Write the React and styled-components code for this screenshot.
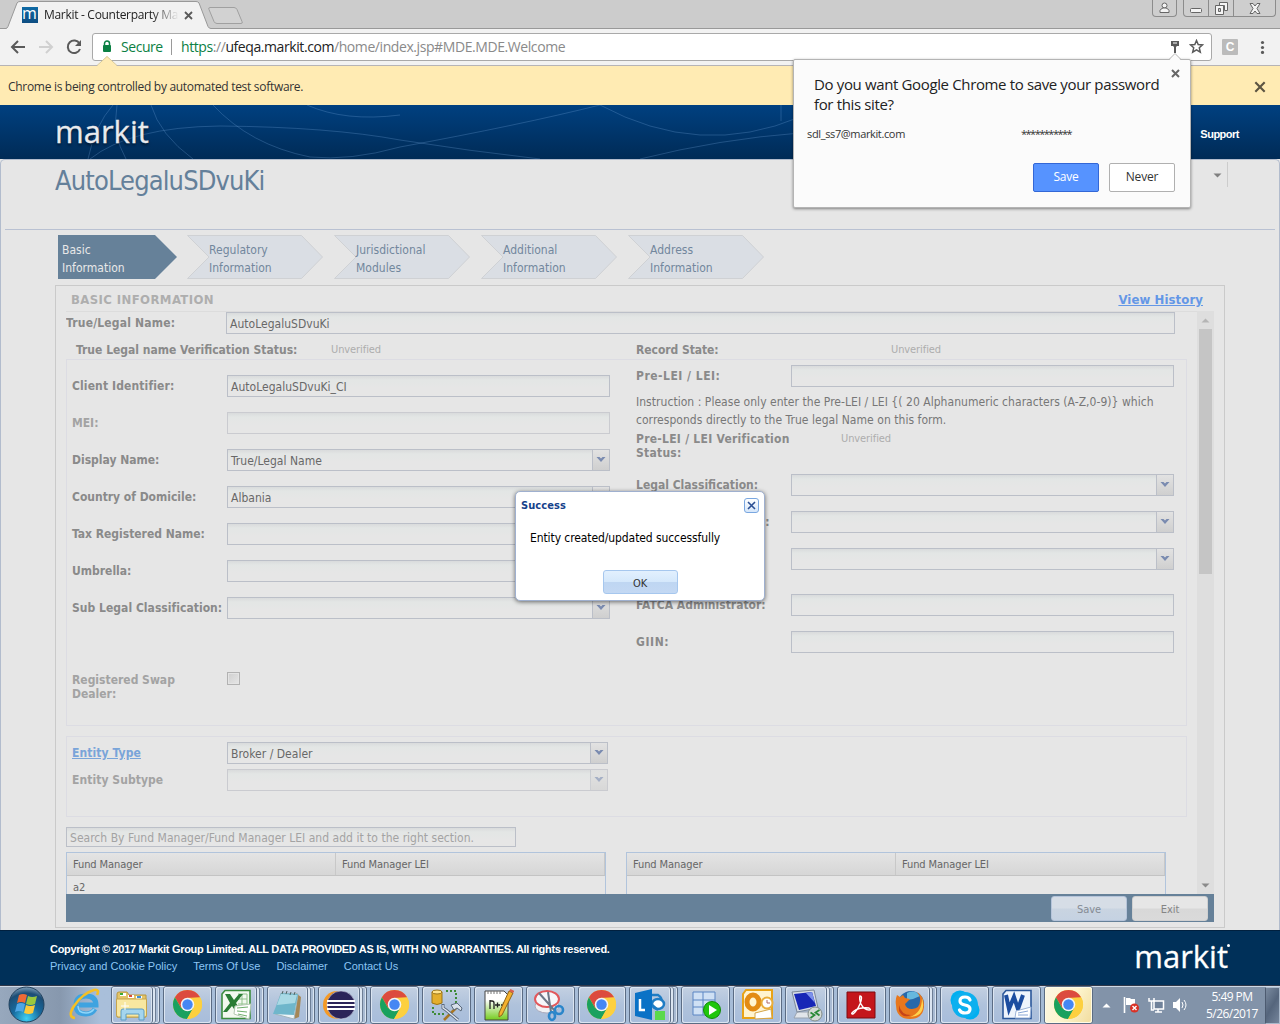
import React from "react";
import styled, { createGlobalStyle, css } from "styled-components";

const tahoma = `"DejaVu Sans Condensed", "DejaVu Sans", sans-serif`;
const segoe = `"Open Sans", "Noto Sans", sans-serif`;
const arial = `"Liberation Sans", sans-serif`;

const Global = createGlobalStyle`
  * { box-sizing: border-box; }
  body { margin: 0; }
  svg { display: block; flex: none; }
`;

const Screen = styled.div`
  position: relative;
  width: 1280px;
  height: 1024px;
  overflow: hidden;
  display: flex;
  flex-direction: column;
  background: #e6e6e6;
  font: 12px ${tahoma};
  white-space: nowrap;
`;

/* ---------- browser chrome ---------- */
const TabStrip = styled.div`
  flex: none;
  height: 29px;
  display: flex;
  align-items: flex-start;
  background: #ccc;
  box-shadow: inset 0 -1px 0 #999;
  padding-left: 5px;
`;
const Tab = styled.div`
  position: relative;
  width: 207px;
  height: 29px;
  display: flex;
  align-items: center;
  padding: 1px 0 0 17px;
`;
const TabShape = styled.svg`
  position: absolute;
  left: 0;
  top: 0;
`;
const Favicon = styled.div`
  position: relative;
  width: 16px;
  height: 16px;
  background: linear-gradient(#0f6aa5, #0e4d82);
  color: #fff;
  font: 16px/12px ${segoe};
  text-align: center;
  text-indent: -1px;
`;
const TabTitle = styled.div`
  position: relative;
  width: 135px;
  margin-left: 6px;
  overflow: hidden;
  font: 12px/16px ${segoe};
  letter-spacing: -0.3px;
  color: #222;
  mask-image: linear-gradient(90deg, #000 108px, transparent 135px);
`;
const TabClose = styled.svg`
  position: relative;
  margin-left: 5px;
`;
const NewTab = styled.svg`
  margin: 6px 0 0 -6px;
`;
const Spacer = styled.div`
  flex: 1;
`;
const WindowButtons = styled.div`
  display: flex;
  height: 17px;
  margin-right: ${(p) => p.$end}px;
  border: 1px solid #8c8c8c;
  border-top: 0;
  border-radius: 0 0 4px 4px;
  background: #cecece;
`;
const WindowButton = styled.div`
  width: ${(p) => p.$w}px;
  display: flex;
  justify-content: center;
  align-items: center;
  & + & {
    border-left: 1px solid #8c8c8c;
  }
`;
const Toolbar = styled.div`
  flex: none;
  height: 37px;
  display: flex;
  align-items: center;
  padding: 0 0 1px 8px;
  background: #f2f2f2;
  border-bottom: 1px solid #b6b4b6;
`;
const NavIcon = styled.svg`
  width: 20px;
  height: 20px;
  margin-right: 8px;
`;
const Omnibox = styled.div`
  width: 1120px;
  height: 28px;
  display: flex;
  align-items: center;
  padding: 0 7px 0 8px;
  background: #fff;
  border: 1px solid #a9a9a9;
  border-radius: 3px;
  font: 14px/20px ${segoe};
  color: #8a8a8a;
`;
const Secure = styled.span`
  margin-left: 8px;
  width: 50px;
  color: #0b8043;
  letter-spacing: -0.45px;
`;
const Url = styled.span`
  padding-left: 9px;
  border-left: 1px solid #9a9a9a;
  line-height: 16px;
  letter-spacing: -0.42px;
`;
const Scheme = styled.span`
  color: #0b8043;
`;
const Host = styled.span`
  color: #222;
`;
const OmniIcons = styled.div`
  display: flex;
  align-items: center;
  gap: 7px;
  margin-left: auto;
`;
const Extension = styled.div`
  width: 16px;
  height: 16px;
  margin: 0 17px 0 10px;
  background: #bbb;
  border-radius: 1px;
  color: #fff;
  font: bold 12px/16px ${arial};
  text-align: center;
`;
const InfoBar = styled.div`
  position: relative;
  flex: none;
  height: 39px;
  display: flex;
  align-items: center;
  justify-content: space-between;
  padding: 3px 14px 0 8px;
  background: #ffebb3;
  font: 12px/16px ${segoe};
  letter-spacing: -0.3px;
  color: #333;
`;
const Notch = styled.svg`
  position: absolute;
  left: 97px;
  top: -10px;
`;

const PasswordBubble = styled.div`
  position: absolute;
  left: 793px;
  top: 59px;
  width: 398px;
  height: 149px;
  padding: 14px 15px 15px 13px;
  display: flex;
  flex-direction: column;
  background: #fbfbfb;
  border: 1px solid #b4b4b4;
  border-radius: 2px;
  box-shadow: 0 1px 3px rgba(0, 0, 0, 0.45);
  font: 11px/16px ${segoe};
  color: #333;
`;
const BubbleTip = styled.svg`
  position: absolute;
  left: 373px;
  top: -8px;
`;
const BubbleClose = styled.svg`
  position: absolute;
  right: 10px;
  top: 9px;
`;
const BubbleTitle = styled.div`
  padding-left: 7px;
  font: 15px/20px ${segoe};
  letter-spacing: -0.36px;
  color: #222;
`;
const Credentials = styled.div`
  display: flex;
  margin-top: 12px;
`;
const Credential = styled.div`
  width: ${(p) => p.$w}px;
  letter-spacing: ${(p) => p.$ls || -0.36}px;
`;
const BubbleActions = styled.div`
  display: flex;
  justify-content: flex-end;
  gap: 10px;
  margin-top: auto;
`;
const BubbleButton = styled.button`
  width: 66px;
  height: 29px;
  padding: 0 0 2px;
  border: 1px solid ${(p) => (p.$primary ? "#3367d6" : "#b0b0b0")};
  border-radius: 2px;
  background: ${(p) => (p.$primary ? "#5693ff" : "#fff")};
  color: ${(p) => (p.$primary ? "#fff" : "#333")};
  font: 12px/16px ${segoe};
  letter-spacing: -0.2px;
`;

/* ---------- page header and footer ---------- */
const Header = styled.header`
  position: relative;
  flex: none;
  height: 54px;
  display: flex;
  align-items: center;
  justify-content: space-between;
  padding: 0 41px 0 55px;
  background: linear-gradient(#004080, #002b56);
`;
const HeaderLines = styled.svg`
  position: absolute;
  left: 0;
  top: 0;
`;
const Logo = styled.div`
  position: relative;
  font: 31px/40px ${segoe};
  color: ${(p) => (p.$shadow ? "#e9ebee" : "#fff")};
  margin-top: ${(p) => (p.$shadow ? -2 : 0)}px;
  text-shadow: ${(p) => (p.$shadow ? "0 2px 3px rgba(0,0,0,.6)" : "none")};
  -webkit-text-stroke: 0.3px currentColor;
`;
const LogoDot = styled.sup`
  position: absolute;
  right: -2px;
  top: 8px;
  width: 3px;
  height: 3px;
  border-radius: 50%;
  background: #fff;
`;
const Support = styled.a`
  position: relative;
  margin-top: 4px;
  font: bold 11px/14px ${arial};
  letter-spacing: -0.5px;
  color: #fff;
`;
const Footer = styled.footer`
  flex: none;
  height: 55px;
  display: flex;
  justify-content: space-between;
  padding: 0 52px 0 50px;
  background: #003059;
  border-top: 1px solid #00203f;
`;
const Legal = styled.div`
  padding-top: 10px;
  font: bold 11px/17px ${arial};
  letter-spacing: -0.3px;
  color: #fff;
`;
const FooterLinks = styled.div`
  display: flex;
  gap: 16px;
  font-weight: normal;
  letter-spacing: 0;
  color: #8cc6f5;
`;
const FooterLogo = styled.div`
  padding-top: 5px;
`;

/* ---------- main page ---------- */
const Main = styled.main`
  flex: none;
  height: 771px;
  padding: 0 4px;
  border: 1px solid #b2bccd;
  border-bottom: 0;
  border-radius: 5px 5px 0 0;
  background: #e6e6e6;
`;
const TitleBar = styled.div`
  height: 70px;
  display: flex;
  justify-content: space-between;
  padding: 2px 47px 0 50px;
  border-bottom: 1px solid #b9c1d2;
`;
const Title = styled.h1`
  margin: 1px 0 0;
  font: 27px/36px ${tahoma};
  letter-spacing: -0.87px;
  color: #64809a;
`;
const MenuArrow = styled.div`
  width: 15px;
  height: 25px;
  border-right: 1px solid #ccc;
  padding-top: 11px;
`;
const Steps = styled.div`
  display: flex;
  height: 55px;
  padding: 5px 0 0 52px;
`;
const Step = styled.div`
  position: relative;
  width: ${(p) => (p.$active ? 129 : 147)}px;
  height: 44px;
  padding: 6px 0 0 ${(p) => (p.$active ? 5 : 23)}px;
  line-height: 18px;
  letter-spacing: 0.02px;
  color: ${(p) => (p.$active ? "#e8e8e8" : "#72879d")};
`;
const StepShape = styled.svg`
  position: absolute;
  left: ${(p) => p.$shift}px;
  top: 0;
`;
const StepText = styled.div`
  position: relative;
`;
const Panel = styled.section`
  width: 1170px;
  height: 643px;
  margin-left: 50px;
  padding: 0 10px;
  border: 1px solid #cacaca;
`;
const PanelHeader = styled.div`
  height: 25px;
  display: flex;
  justify-content: space-between;
  padding: 1px 11px 0 5px;
  font: bold 13px/25px ${tahoma};
  color: #aeaeae;
`;
const PanelTitle = styled.span`
  letter-spacing: 0.4px;
`;
const History = styled.a`
  letter-spacing: 0.1px;
  color: #6497e6;
  text-decoration: underline;
`;
const ScrollBody = styled.div`
  height: 583px;
  display: flex;
  justify-content: space-between;
  overflow: hidden;
`;
const Form = styled.div`
  width: 1131px;
  border-top: 1px solid #dcdcdc;
`;
const ScrollBar = styled.div`
  width: 17px;
  display: flex;
  flex-direction: column;
  align-items: center;
  background: #dedede;
  padding: 7px 0 6px;
`;
const Thumb = styled.div`
  width: 13px;
  height: 245px;
  margin: 6px 0 auto;
  background: #c5c5c5;
`;

const Label = styled.div`
  flex: none;
  width: ${(p) => p.$w || 155}px;
  font-weight: bold;
  line-height: ${(p) => p.$lh || 22}px;
  letter-spacing: ${(p) => p.$ls ?? 0}px;
  color: ${(p) => (p.$link ? "#79a4d9" : p.$muted ? "#a3a3a3" : "#8a8a8a")};
  text-decoration: ${(p) => (p.$link ? "underline" : "none")};
`;
const Input = styled.div`
  width: ${(p) => p.$w || 383}px;
  height: ${(p) => p.$h || 22}px;
  display: flex;
  justify-content: space-between;
  padding-left: 3px;
  line-height: ${(p) => (p.$h || 22)}px;
  letter-spacing: 0.02px;
  background: linear-gradient(#d9dbdc, #e3e6e5 4px, #e6e6e6 12px);
  border: 1px solid ${(p) => (p.$muted ? "#cacbd0" : "#bbbfc8")};
  color: ${(p) => (p.$placeholder ? "#a3a3a3" : "#686868")};
`;
const Trigger = styled.div`
  width: 17px;
  display: flex;
  justify-content: center;
  padding-top: 6px;
  border-left: 1px solid #bbbfc8;
  background: linear-gradient(#e2e2e2, #cfcfcf);
  opacity: ${(p) => (p.$muted ? 0.6 : 1)};
`;
const TopRow = styled.div`
  display: flex;
  height: 22px;
`;
const StatusRow = styled.div`
  display: flex;
  padding: 5px 0 0 10px;
  height: 25px;
`;
const Status = styled.div`
  flex: none;
  width: ${(p) => p.$w || 100}px;
  font-size: 11px;
  line-height: ${(p) => p.$lh || 22}px;
  letter-spacing: -0.09px;
  color: #adadad;
`;
const Group = styled.div`
  width: 1121px;
  height: ${(p) => p.$h}px;
  margin-bottom: 10px;
  border: 1px solid #dcdce3;
  padding: 0 5px;
  display: flex;
  gap: 26px;
`;
const Column = styled.div`
  width: 538px;
  padding-top: ${(p) => p.$top}px;
  display: flex;
  flex-direction: column;
`;
const Field = styled.div`
  display: flex;
  margin: ${(p) => p.$mt || 0}px 0 ${(p) => p.$mb ?? 15}px;
`;
const Instruction = styled.p`
  margin: -9px 0 3px;
  line-height: 18px;
  letter-spacing: 0.04px;
  color: #777;
`;
const CheckBox = styled.div`
  width: 13px;
  height: 13px;
  margin-top: -1px;
  border: 1px solid #b2b2b2;
  background: linear-gradient(135deg, #cfcfcf, #e6e6e6);
  box-shadow: inset 0 0 0 1px #e4e4e4;
`;
const Tables = styled.div`
  display: flex;
  gap: 20px;
  margin-top: 5px;
`;
const Table = styled.div`
  width: 540px;
  height: 60px;
  border: 1px solid #b1c4dc;
  font-size: 11px;
  letter-spacing: -0.09px;
  color: #666;
`;
const TableHead = styled.div`
  display: grid;
  grid-template-columns: 269px 269px;
  height: 23px;
  line-height: 23px;
  border-bottom: 1px solid #c3c3c3;
  background: linear-gradient(#e4e4e4, #d6d6d6);
`;
const HeadCell = styled.div`
  height: 22px;
  padding-left: 6px;
  border-right: 1px solid #c8c8c8;
`;
const Cell = styled.div`
  padding-left: 6px;
  line-height: 24px;
`;
const ActionBar = styled.div`
  height: 28px;
  display: flex;
  justify-content: flex-end;
  align-items: center;
  gap: 5px;
  padding-right: 6px;
  background: #668199;
`;
const ExtButton = styled.button`
  width: 76px;
  height: 25px;
  padding: 2px 0 0;
  font: 11px ${tahoma};
  letter-spacing: -0.1px;
  border-radius: 3px;
  ${(p) =>
    p.$tone === "save" &&
    css`
      color: #858b94;
      border: 1px solid #b5c4da;
      background: linear-gradient(#d6dde6 0 48%, #c9d4e1 52%, #c5d2e2);
    `}
  ${(p) =>
    p.$tone === "exit" &&
    css`
      color: #858585;
      border: 1px solid #d0d0d0;
      background: linear-gradient(#e6e6e6 0 48%, #d8d8d8 52%, #dadada);
    `}
  ${(p) =>
    p.$tone === "ok" &&
    css`
      width: 75px;
      height: 24px;
      color: #333;
      border: 1px solid #a6c7ee;
      background: linear-gradient(#e2f0fe, #d5e8fb 48%, #bfd6f2 52%, #c3d8f3);
    `}
`;

/* ---------- dialog ---------- */
const Dialog = styled.div`
  position: absolute;
  left: 515px;
  top: 491px;
  width: 250px;
  height: 110px;
  display: flex;
  flex-direction: column;
  align-items: center;
  padding: 6px 5px;
  background: #fff;
  border: 1px solid #9fb0cf;
  border-radius: 5px;
  box-shadow: 0 1px 4px rgba(0, 0, 0, 0.55);
`;
const DialogHead = styled.div`
  width: 100%;
  display: flex;
  justify-content: space-between;
  font: bold 11px/15px ${tahoma};
  letter-spacing: 0.1px;
  color: #15428b;
`;
const DialogClose = styled.div`
  width: 15px;
  height: 15px;
  display: flex;
  align-items: center;
  justify-content: center;
  border: 1px solid #7aa7e0;
  border-radius: 3px;
  background: linear-gradient(#fff, #d5e6fa);
`;
const Message = styled.div`
  width: 100%;
  flex: 1;
  padding: 16px 0 0 9px;
  font-size: 12px;
  line-height: 18px;
  letter-spacing: -0.09px;
  color: #000;
`;

/* ---------- taskbar ---------- */
const Taskbar = styled.div`
  flex: none;
  height: 39px;
  display: flex;
  border-top: 1px solid #30384a;
  box-shadow: inset 0 1px 0 #cfd9e6;
  background: linear-gradient(90deg, #97a8bd, #8798ae 60px, #a9bfda 100px, #a5bbd6 1040px, #8293a9 1100px);
`;
const Start = styled.div`
  width: 60px;
  padding: 0 0 0 8px;
`;
const Pinned = styled.div`
  width: 51px;
  padding: 1px 0 0 8px;
`;
const Tasks = styled.div`
  width: 985px;
  display: grid;
  grid-template-columns: repeat(19, 1fr);
`;
const Stack = styled.div`
  margin-right: 3px;
  display: flex;
  border: 1px solid #5b6c84;
  border-radius: 3px;
  box-shadow: inset 0 0 0 1px #dbe5f1;
  padding-right: ${(p) => (p.$stacked ? 6 : 0)}px;
  background: #a9bbd3;
`;
const Task = styled.div`
  flex: 1;
  display: flex;
  align-items: center;
  justify-content: center;
  padding-bottom: 1px;
  border-radius: 3px;
  border-right: ${(p) => (p.$stacked ? "1px solid #5b6c84" : "0")};
  box-shadow: inset 0 0 0 1px ${(p) => (p.$active ? "#fffbe6" : "#dbe5f1")}${(p) => (p.$stacked ? ", 2px 0 0 #dbe5f1, 3px 0 0 #6d7e96" : "")};
  background: ${(p) =>
    p.$active ? "linear-gradient(120deg,#fbf6e4,#fdf5cf 50%,#f1dc9d)" : "linear-gradient(#c3d0e2,#afc2db 50%,#a8bddb)"};
`;
const Tray = styled.div`
  flex: 1;
  display: flex;
  align-items: center;
  padding: 0 0 0 6px;
`;
const TrayIcon = styled.svg`
  margin-left: ${(p) => p.$gap}px;
`;
const Clock = styled.div`
  width: 66px;
  margin: 0 0 0 auto;
  font: 12px/17px ${segoe};
  letter-spacing: -0.55px;
  text-align: center;
  color: #fff;
`;
const ShowDesktop = styled.div`
  width: 15px;
  margin-top: 1px;
  border: 1px solid #a9b8ca;
  border-left-color: #4d5b70;
  background: linear-gradient(120deg, #7b8ba0, #55657c 50%, #75859b);
`;

/* ---------- drawings ---------- */
const Cross = ({ as: C = "svg", size = 9, color = "#555", w = 2 }) => (
  <C width={size} height={size} viewBox="0 0 9 9">
    <path d="M1 1l7 7M8 1l-7 7" stroke={color} strokeWidth={w} />
  </C>
);
const Chevron = () => (
  <svg width="10" height="8" viewBox="0 0 10 8">
    <path d="M0.5 1h3L5 2.6 6.500 1h3L5 6z" fill="#7a8bb0" />
  </svg>
);
const Triangle = ({ up, color = "#8a8a8a" }) => (
  <svg width="9" height="5" viewBox="0 0 9 5">
    <path d={up ? "M0.500 4.500h8L4.500 0.500z" : "M0.500 0.500h8L4.500 4.500z"} fill={color} />
  </svg>
);

const ChromeIcon = () => (
  <svg width="31" height="31" viewBox="0 0 32 32">
    <circle cx="16" cy="16" r="15" fill="#fbcf3c" />
    <path d="M3 8.500A15 15 0 0 1 29 8.500L16 9.500 9.500 19.800z" fill="#dc4b3e" />
    <path d="M3 8.500A15 15 0 0 0 15.500 31L22.500 19.500 9.500 19.800z" fill="#1aa15f" />
    <path d="M16 9h13.300A15 15 0 0 1 15.500 31L22 19z" fill="#fdd03f" />
    <circle cx="16" cy="16" r="7" fill="#f4f4f4" />
    <circle cx="16" cy="16" r="5.400" fill="#4587f3" />
  </svg>
);
const ExplorerIcon = () => (
  <svg width="34" height="32" viewBox="0 0 34 32">
    <path d="M2 5q0-2 2-2h8l2 3h17v22H2z" fill="#e3c46a" stroke="#ba983f" />
    <path d="M5 4h6v3H5zM13 6h6v3h-6zM21 7h6v3h-6z" fill="#fff" />
    <path d="M5 4h3v2H5z" fill="#3aab35" />
    <path d="M14 6h3v2h-3z" fill="#d94b3a" />
    <path d="M22 7h4v2h-4z" fill="#3d8fd6" />
    <path d="M1.500 10h30v16q0 2-2 2h-26q-2 0-2-2z" fill="#f8e7a0" stroke="#c6a54c" />
    <path d="M6 31V22q0-2 2-2h19q2 0 2 2v9h-5v-6H11v6z" fill="#a4d5ee" stroke="#5b9cc4" />
    <path d="M10 13v8M6 17h8" stroke="#fff" />
  </svg>
);
const ExcelIcon = () => (
  <svg width="32" height="32" viewBox="0 0 32 32">
    <path d="M5 1.500h25v28H2V5z" fill="#f2f8ef" stroke="#3c8c3f" strokeWidth="1.600" />
    <path d="M18 5h9v20h-9M18 10h9M18 15h9M22 5v20" fill="none" stroke="#8fc18b" />
    <path d="M5 5h5l4 6 5-6h4l-7 9 6 9h-6l-4-6-5 6H3l7-9z" fill="#2a7c35" />
    <path d="M15 17l16-2-2 15-15-5z" fill="#fff" stroke="#b5c9b2" />
    <path d="M17 19l11-1M17 22l10 1M18 25l9 2" stroke="#6fae6d" />
  </svg>
);
const NotepadIcon = () => (
  <svg width="32" height="32" viewBox="0 0 32 32">
    <path d="M25 4l5 4-2 20-5 2z" fill="#a58757" />
    <path d="M10 4l17 1-4 25-19-5z" fill="#eef5f8" stroke="#a3b4ba" />
    <path d="M10 4l17 1-4 21-21-1z" fill="#6fb6cb" />
    <path d="M10 5l16 1-2 8-18 2z" fill="#a9d9e5" />
    <path d="M11 5l1-3M15 5l1-3M19 6l1-3M23 6l1-3" stroke="#566" />
  </svg>
);
const EclipseIcon = () => (
  <svg width="34" height="32" viewBox="0 0 34 32">
    <circle cx="15" cy="16" r="14" fill="#f49a27" />
    <circle cx="19" cy="16" r="14" fill="#2b2459" stroke="#c9cde0" strokeWidth=".6" />
    <path d="M5 12h28M5 16h28M5 20h28" stroke="#fff" strokeWidth="1.800" />
  </svg>
);
const SqlToolsIcon = () => (
  <svg width="34" height="34" viewBox="0 0 34 34">
    <path d="M3 4v11q5 3 10 0V4z" fill="#e4ae2c" stroke="#9c7417" />
    <ellipse cx="8" cy="4" rx="5" ry="2" fill="#ffe38b" stroke="#9c7417" />
    <path d="M17 3h10v12M4 19v7h12" fill="none" stroke="#3f8b38" strokeWidth="2" strokeDasharray="2 2" />
    <path d="M15 32L27 20" stroke="#a87624" strokeWidth="2.600" />
    <path d="M22 17l6-2 5 5-1 3-4-3-3 2z" fill="#d8e0ea" stroke="#59687c" />
    <path d="M14 16v4l3 2 12 10" fill="none" stroke="#59687c" strokeWidth="3" />
    <path d="M14 17v3l3 2 12 10" fill="none" stroke="#e3eaf2" strokeWidth="1.300" />
  </svg>
);
const NppIcon = () => (
  <svg width="32" height="34" viewBox="0 0 32 34">
    <defs>
      <linearGradient id="npp" x2="0" y2="1">
        <stop offset=".3" stopColor="#fff" />
        <stop offset="1" stopColor="#74cc1e" />
      </linearGradient>
    </defs>
    <path d="M3 3h19l4 4v25H3z" fill="url(#npp)" stroke="#444" />
    <path d="M6 3v3M9 3v3M12 3v3M15 3v3M18 3v3" stroke="#777" />
    <path d="M8 21v-9M8 13h2q2 0 2 2v6M13 17h5M15.500 14.500v5M19 17h5M21.500 14.500v5" fill="none" stroke="#222" strokeWidth="1.300" />
    <path d="M27 3l4 2-11 22-3 2v-4z" fill="#f3b12e" stroke="#8d6419" />
    <path d="M27 3l1.500-2 4 2L31 5z" fill="#d9604f" />
  </svg>
);
const SnipIcon = () => (
  <svg width="34" height="34" viewBox="0 0 34 34">
    <ellipse cx="14" cy="18" rx="12" ry="7" fill="#f0f1f4" stroke="#aab" />
    <ellipse cx="14" cy="11" rx="12" ry="8" fill="#f6f7fa" stroke="#e1585c" strokeWidth="2" />
    <path d="M6 5l16 18M15 4l3 20" stroke="#6d7787" strokeWidth="2" />
    <circle cx="26" cy="22" r="4" fill="none" stroke="#2b86ca" strokeWidth="2.600" />
    <ellipse cx="19" cy="28" rx="3" ry="4" fill="none" stroke="#2b86ca" strokeWidth="2.600" />
  </svg>
);
const LyncIcon = () => (
  <svg width="34" height="34" viewBox="0 0 34 34">
    <path d="M19 7h6q5 3 3 8" fill="none" stroke="#1e7cc4" strokeWidth="2.500" />
    <ellipse cx="25" cy="16" rx="6" ry="5" fill="#fff" stroke="#1e7cc4" strokeWidth="2.500" />
    <path d="M19 17l6 5" stroke="#1e7cc4" strokeWidth="2.500" />
    <path d="M2 5l17-4v31L2 28z" fill="#0a72c6" />
    <path d="M7 11v11h5" fill="none" stroke="#fff" strokeWidth="2.500" />
    <path d="M22 23h10v9H22z" fill="#5bd94c" />
  </svg>
);
const RunIcon = () => (
  <svg width="34" height="32" viewBox="0 0 34 32">
    <path d="M4 3h22v23H4zM4 11h22M4 18h22M14 3v23" fill="#cfe0f4" stroke="#5b85c3" />
    <circle cx="23" cy="21" r="8.500" fill="#20c60b" stroke="#118a06" />
    <path d="M20 16l8 5-8 5z" fill="#fff" />
  </svg>
);
const OutlookIcon = () => (
  <svg width="34" height="32" viewBox="0 0 34 32">
    <path d="M5 1h26v28H2V5z" fill="#fff4d0" stroke="#e8a317" strokeWidth="2" />
    <ellipse cx="12" cy="13" rx="6" ry="7" fill="none" stroke="#e38b13" strokeWidth="5" />
    <path d="M14 24l16-4 1 9-17 1z" fill="#fff" stroke="#d3a44b" />
    <circle cx="26" cy="14" r="5.500" fill="#fff" stroke="#e9ad3a" strokeWidth="2" />
    <path d="M26 11v3h3" fill="none" stroke="#a66" />
  </svg>
);
const RdpIcon = () => (
  <svg width="34" height="34" viewBox="0 0 34 34">
    <path d="M8 24h14l3 6H5z" fill="#e1e5ea" stroke="#98a2b0" />
    <path d="M3 4l22-2 4 18-21 4z" fill="#d7dde6" stroke="#7c8898" />
    <path d="M5 6l18-2 4 14-17 4z" fill="#1726b6" />
    <path d="M17 5l6-1 3 11z" fill="#7c91ea" />
    <circle cx="26" cy="26" r="7" fill="#d4dad5" stroke="#828c88" />
    <path d="M21.500 24.500l4 2.500-4 3M30.500 22l-4 2.500 4 3" fill="none" stroke="#2b8a37" strokeWidth="1.800" />
  </svg>
);
const AcrobatIcon = () => (
  <svg width="30" height="28" viewBox="0 0 30 28">
    <path d="M1 1h28v26H1z" fill="#c4161c" stroke="#7d0b10" />
    <path d="M14 5q3 0 0 8-3 7-7 10-3 0 1-3 6-4 15-3 3 2 0 2-5 0-8-6-2-5-1-8z" fill="none" stroke="#fff" strokeWidth="1.400" />
  </svg>
);
const FirefoxIcon = () => (
  <svg width="32" height="32" viewBox="0 0 32 32">
    <circle cx="17" cy="15" r="13" fill="#2868aa" />
    <path d="M13 4q8-4 13 3l-7 3-6 1z" fill="#66b8df" />
    <path d="M3 6l3 2 3-2 2 3 5 1-5 5q1 5 7 5 9 0 8-11-1-4-3-6 7 4 7 13 0 14-14 14T2 16q-1-5 1-10z" fill="#e8771d" />
    <path d="M28 9q5 18-12 19 12-4 12-19z" fill="#ffd34d" />
    <path d="M5 16q2 10 12 10-8 4-12-4z" fill="#c64418" />
  </svg>
);
const SkypeIcon = () => (
  <svg width="32" height="32" viewBox="0 0 32 32">
    <circle cx="11" cy="11" r="9.500" fill="#00aff0" />
    <circle cx="21" cy="21" r="9.500" fill="#00aff0" />
    <circle cx="16" cy="16" r="13" fill="#0cb0ef" />
    <path d="M21 11q-1-3-5-3-5 0-5 4 0 3 5 4t5 4q0 4-5 4-4 0-5.500-3" fill="none" stroke="#fff" strokeWidth="3.200" strokeLinecap="round" />
  </svg>
);
const WordIcon = () => (
  <svg width="32" height="32" viewBox="0 0 32 32">
    <path d="M5 1.500h25v28H2V5z" fill="#eef4fc" stroke="#2b579a" strokeWidth="1.600" />
    <path d="M5 6l3 14 5-12 4 12 5-14" fill="none" stroke="#1c4da0" strokeWidth="4" />
    <path d="M15 22l15-4-1 11H14z" fill="#fff" stroke="#9db4d8" />
    <path d="M17 24l10-2M17 26h10" stroke="#88a6d6" />
  </svg>
);
const IeIcon = () => (
  <svg width="34" height="34" viewBox="0 0 34 34">
    <path d="M27 22q-3 5-9 5-10 0-10-9t10-9q10 0 10 9H11" fill="none" stroke="#3fa3e0" strokeWidth="5" />
    <path d="M26 22q-3 4-8 4-8 0-8-7" fill="none" stroke="#8fd6fa" strokeWidth="1.500" />
    <path d="M7 31Q-1 30 6 19 15 6 26 3q6-1 3 5" fill="none" stroke="#f4bf26" strokeWidth="2.600" />
  </svg>
);
const StartOrb = () => (
  <svg width="37" height="37" viewBox="0 0 37 37">
    <defs>
      <radialGradient id="orb" cy=".9" r=".9">
        <stop offset="0" stopColor="#3fd1f4" />
        <stop offset=".45" stopColor="#176a9e" />
        <stop offset=".8" stopColor="#1d4d75" />
        <stop offset="1" stopColor="#7f9fb9" />
      </radialGradient>
    </defs>
    <circle cx="18.500" cy="18.500" r="17.500" fill="url(#orb)" stroke="#23435f" />
    <path d="M11 9q4-2 8 0l-2 8q-4-2-8 0z" fill="#ee6a35" />
    <path d="M20 10q4 2 9 0l-2 8q-4 2-9 0z" fill="#9bc83d" />
    <path d="M9 18q4-2 8 0l-2 8q-4-2-8 0z" fill="#4ea6e6" />
    <path d="M18 19q4 2 9 0l-2 8q-4 2-9 0z" fill="#fcca3a" />
  </svg>
);

const tasks = [
  [ExplorerIcon, 1], [ChromeIcon], [ExcelIcon, 1], [NotepadIcon, 1], [EclipseIcon, 1], [ChromeIcon], [SqlToolsIcon],
  [NppIcon], [SnipIcon], [ChromeIcon], [LyncIcon, 1], [RunIcon], [OutlookIcon], [RdpIcon, 1], [AcrobatIcon],
  [FirefoxIcon, 1], [SkypeIcon], [WordIcon], [ChromeIcon, 0, 1],
];

const steps = [
  ["Basic", "Information"], ["Regulatory", "Information"], ["Jurisdictional", "Modules"],
  ["Additional", "Information"], ["Address", "Information"],
];

const leftFields = [
  { label: "Client Identifier:", value: "AutoLegaluSDvuKi_CI", ls: 0.12 },
  { label: "MEI:", muted: true },
  { label: "Display Name:", value: "True/Legal Name", combo: true },
  { label: "Country of Domicile:", value: "Albania", combo: true, ls: -0.02 },
  { label: "Tax Registered Name:", ls: -0.02 },
  { label: "Umbrella:" },
  { label: "Sub Legal Classification:", combo: true, ls: 0.03 },
];

const FormField = ({ label, value, combo, muted, link, w, mb, ls }) => (
  <Field $mb={mb}>
    <Label $muted={muted} $link={link} $ls={ls}>{label}</Label>
    <Input $w={w} $muted={muted}>
      <span>{value}</span>
      {combo && <Trigger $muted={muted}><Chevron /></Trigger>}
    </Input>
  </Field>
);

const ManagerTable = ({ children }) => (
  <Table>
    <TableHead>
      <HeadCell>Fund Manager</HeadCell>
      <HeadCell>Fund Manager LEI</HeadCell>
    </TableHead>
    <Cell>{children}</Cell>
  </Table>
);

export default function App() {
  return (
    <Screen>
      <Global />
      <TabStrip>
        <Tab>
          <TabShape width="207" height="29">
            <path d="M0 28.500h1q1 0 2-2L12 3q1-1.500 3-1.500h176q2 0 3 1.500l9 23.500q1 2 3 2V29H0z" fill="#f2f2f2" />
            <path d="M0 28.500h1q1 0 2-2L12 3q1-1.500 3-1.500h176q2 0 3 1.500l9 23.500q1 2 3 2" fill="none" stroke="#999" />
          </TabShape>
          <Favicon>m</Favicon>
          <TabTitle>Markit - Counterparty Ma</TabTitle>
          <Cross as={TabClose} color="#5a5a5a" w={1.8} />
        </Tab>
        <NewTab width="38" height="20">
          <path d="M4 1.500h24q2 0 3 2l5 12q1 2-1 2H11q-2 0-3-2L3 3.500q-1-2 1-2z" fill="#d2d2d2" stroke="#a0a0a0" />
        </NewTab>
        <Spacer />
        <WindowButtons $end={6}>
          <WindowButton $w={23}>
            <svg width="11" height="12" viewBox="0 0 11 12">
              <circle cx="5.500" cy="3.500" r="2.500" fill="#f4f4f4" stroke="#666" />
              <path d="M1 10.500V8.500q1-2 3-2.500h3q2 .500 3 2.500v2z" fill="#f4f4f4" stroke="#666" />
            </svg>
          </WindowButton>
        </WindowButtons>
        <WindowButtons $end={4}>
          <WindowButton $w={24}>
            <svg width="12" height="12"><rect x=".5" y="6.500" width="11" height="4" rx="1" fill="#f4f4f4" stroke="#666" /></svg>
          </WindowButton>
          <WindowButton $w={25}>
            <svg width="13" height="13">
              <path d="M4.500.500h8v8h-3v-5h-5z" fill="#f4f4f4" stroke="#666" />
              <path d="M.500 3.500h8v9h-8z" fill="#f4f4f4" stroke="#666" />
              <path d="M3.500 6.500h2v3h-2z" fill="#ccc" stroke="#666" />
            </svg>
          </WindowButton>
          <WindowButton $w={42}>
            <svg width="12" height="11">
              <path d="M1 .500h3l2 2.500 2-2.500h3L8 5.500l3 5H8L6 8l-2 2.500H1l3-5z" fill="#f4f4f4" stroke="#666" />
            </svg>
          </WindowButton>
        </WindowButtons>
      </TabStrip>

      <Toolbar>
        <NavIcon viewBox="0 0 20 20"><path d="M17 10H4M10 4l-6 6 6 6" fill="none" stroke="#5a5a5a" strokeWidth="2" /></NavIcon>
        <NavIcon viewBox="0 0 20 20"><path d="M3 10h13M10 4l6 6-6 6" fill="none" stroke="#d0d0d0" strokeWidth="2" /></NavIcon>
        <NavIcon viewBox="0 0 20 20">
          <path d="M15.500 6.500A6.300 6.300 0 1 0 16 12" fill="none" stroke="#5a5a5a" strokeWidth="2" />
          <path d="M17 3v6h-6z" fill="#5a5a5a" />
        </NavIcon>
        <Omnibox>
          <svg width="12" height="13">
            <path d="M3.500 6V3.500a2.500 2.500 0 0 1 5 0V6" fill="none" stroke="#0b8043" strokeWidth="1.500" />
            <rect x="2" y="5" width="8" height="7" rx="1" fill="#0b8043" />
          </svg>
          <Secure>Secure</Secure>
          <Url><Scheme>https</Scheme>://<Host>ufeqa.markit.com</Host>/home/index.jsp#MDE.MDE.Welcome</Url>
          <OmniIcons>
            <svg width="14" height="14"><path d="M3 1h8v5H9L8 7v6H6V7L5 6H3z" fill="#5a5a5a" /><path d="M5 3h4" stroke="#fff" /></svg>
            <svg width="15" height="15" viewBox="0 0 15 15">
              <path d="M7.500 1.500l1.700 4 4.300.400-3.200 2.900 1 4.300-3.800-2.300-3.800 2.300 1-4.300L1.500 5.900l4.300-.400z" fill="none" stroke="#5a5a5a" strokeWidth="1.500" />
            </svg>
          </OmniIcons>
        </Omnibox>
        <Extension>C</Extension>
        <svg width="14" height="14"><circle cx="7.500" cy="2.500" r="1.600" fill="#5a5a5a" /><circle cx="7.500" cy="7.500" r="1.600" fill="#5a5a5a" /><circle cx="7.500" cy="12.400" r="1.600" fill="#5a5a5a" /></svg>
      </Toolbar>

      <InfoBar>
        <Notch width="20" height="11"><path d="M0 10L10 0l10 10v1H0z" fill="#ffebb3" /><path d="M0 9.500L10 .500l10 9" fill="none" stroke="#d8c99b" /></Notch>
        <span>Chrome is being controlled by automated test software.</span>
        <Cross size={12} color="#5c5442" w={1.6} />
      </InfoBar>

      <Header>
        <HeaderLines width="1280" height="54">
          <g fill="none" stroke="#6ca0d4" strokeOpacity=".3">
            <path d="M113 0Q95 20 88 54M117 0Q112 30 126 54M151 0Q160 30 193 54M90 54Q130 22 220 21Q330 22 400 35Q470 46 540 54M213 0Q250 40 310 52Q350 56 400 42Q520 20 600 0M307 0Q345 17 400 10M600 0Q700 54 800 12M640 54Q720 34 800 28M781 0v16" />
          </g>
        </HeaderLines>
        <Logo $shadow>markit</Logo>
        <Support>Support</Support>
      </Header>

      <Main>
        <TitleBar>
          <Title>AutoLegaluSDvuKi</Title>
          <MenuArrow><Triangle color="#808080" /></MenuArrow>
        </TitleBar>
        <Steps>
          {steps.map(([a, b], i) => (
            <Step key={b + i} $active={i === 0}>
              <StepShape width="140" height="44" $shift={i === 0 ? 0 : 1}>
                {i === 0 ? (
                  <path d="M1 0h97l22 22-22 22H1z" fill="#668199" />
                ) : (
                  <path d="M.500.500h114l21 21.500-21 21.500H.500L22 22z" fill="#dadee4" stroke="#cfd1d4" />
                )}
              </StepShape>
              <StepText>{a}<br />{b}</StepText>
            </Step>
          ))}
        </Steps>
        <Panel>
          <PanelHeader>
            <PanelTitle>BASIC INFORMATION</PanelTitle>
            <History>View History</History>
          </PanelHeader>
          <ScrollBody>
            <Form>
              <TopRow>
                <Label $w={160} $ls={0.19}>True/Legal Name:</Label>
                <Input $w={949}>AutoLegaluSDvuKi</Input>
              </TopRow>
              <StatusRow>
                <Label $w={255}>True Legal name Verification Status:</Label>
                <Status $w={305}>Unverified</Status>
                <Label $w={255} $ls={-0.05}>Record State:</Label>
                <Status>Unverified</Status>
              </StatusRow>
              <Group $h={367}>
                <Column $top={15}>
                  {leftFields.map((f) => <FormField key={f.label} {...f} />)}
                  <Field $mt={39}>
                    <Label $lh={14} $muted>Registered Swap<br />Dealer:</Label>
                    <CheckBox />
                  </Field>
                </Column>
                <Column $top={5}>
                  <FormField label="Pre-LEI / LEI:" ls={0.5} />
                  <Instruction>
                    Instruction : Please only enter the Pre-LEI / LEI {"{( 20 Alphanumeric characters (A-Z,0-9)}"} which<br />
                    corresponds directly to the True legal Name on this form.
                  </Instruction>
                  <Field $mb={14}>
                    <Label $w={205} $lh={14} $ls={0.26}>Pre-LEI / LEI Verification<br />Status:</Label>
                    <Status $lh={14}>Unverified</Status>
                  </Field>
                  <FormField label="Legal Classification:" combo />
                  <FormField label="Ownership Structure:" combo ls={0.14} />
                  <FormField combo mb={24} />
                  <FormField label="FATCA Administrator:" />
                  <FormField label="GIIN:" ls={0.6} />
                </Column>
              </Group>
              <Group $h={81}>
                <Column $top={5}>
                  <FormField label="Entity Type" value="Broker / Dealer" combo link w={381} mb={5} ls={0.1} />
                  <FormField label="Entity Subtype" combo muted w={381} ls={0.06} />
                </Column>
              </Group>
              <Input $w={450} $h={20} $placeholder>Search By Fund Manager/Fund Manager LEI and add it to the right section.</Input>
              <Tables>
                <ManagerTable>a2</ManagerTable>
                <ManagerTable />
              </Tables>
            </Form>
            <ScrollBar>
              <Triangle up color="#b5b5b5" />
              <Thumb />
              <Triangle />
            </ScrollBar>
          </ScrollBody>
          <ActionBar>
            <ExtButton $tone="save">Save</ExtButton>
            <ExtButton $tone="exit">Exit</ExtButton>
          </ActionBar>
        </Panel>
      </Main>

      <Footer>
        <Legal>
          Copyright © 2017 Markit Group Limited. ALL DATA PROVIDED AS IS, WITH NO WARRANTIES. All rights reserved.
          <FooterLinks>
            <span>Privacy and Cookie Policy</span><span>Terms Of Use</span><span>Disclaimer</span><span>Contact Us</span>
          </FooterLinks>
        </Legal>
        <FooterLogo><Logo>markit<LogoDot /></Logo></FooterLogo>
      </Footer>

      <Taskbar>
        <Start><StartOrb /></Start>
        <Pinned><IeIcon /></Pinned>
        <Tasks>
          {tasks.map(([Icon, stacked, active], i) => (
            <Stack key={i} $stacked={stacked}>
              <Task $stacked={stacked} $active={active}><Icon /></Task>
            </Stack>
          ))}
        </Tasks>
        <Tray>
          <Triangle up color="#fff" />
          <TrayIcon $gap={12} width="17" height="18" viewBox="0 0 17 18">
            <path d="M1.500 1v16" stroke="#fff" strokeWidth="1.600" />
            <path d="M3 2h4l1 1h4v7H9L8 9H3z" fill="#fff" />
            <circle cx="11.500" cy="12" r="4.500" fill="#d93025" />
            <path d="M9.500 10l4 4M13.500 10l-4 4" stroke="#fff" strokeWidth="1.400" />
          </TrayIcon>
          <TrayIcon $gap={8} width="17" height="17" viewBox="0 0 17 17">
            <path d="M6 4h9.500v8H6zM7 15h7M10 12v3" fill="#70829a" stroke="#fff" strokeWidth="1.500" />
            <path d="M1 1v3h5V1M3.500 4v9H6" fill="none" stroke="#fff" strokeWidth="1.500" />
          </TrayIcon>
          <TrayIcon $gap={7} width="16" height="16" viewBox="0 0 16 16">
            <path d="M1 5h3l4-4v14l-4-4H1z" fill="#fff" />
            <path d="M10 5q2 3 0 6M12 3q4 5 0 10" fill="none" stroke="#fff" />
          </TrayIcon>
          <Clock>5:49 PM<br />5/26/2017</Clock>
        </Tray>
        <ShowDesktop />
      </Taskbar>

      <PasswordBubble>
        <BubbleTip width="16" height="9"><path d="M2 8.500L8 2l6 6.500z" fill="#fbfbfb" /><path d="M2 7.500L8 1.500l6 6" fill="none" stroke="#b4b4b4" /></BubbleTip>
        <Cross as={BubbleClose} color="#666" />
        <BubbleTitle>Do you want Google Chrome to save your password<br />for this site?</BubbleTitle>
        <Credentials>
          <Credential $w={214}>sdl_ss7@markit.com</Credential>
          <Credential $w={60} $ls={-1.5}>***********</Credential>
        </Credentials>
        <BubbleActions>
          <BubbleButton $primary>Save</BubbleButton>
          <BubbleButton>Never</BubbleButton>
        </BubbleActions>
      </PasswordBubble>

      <Dialog>
        <DialogHead>
          Success
          <DialogClose><Cross color="#2b4f93" w={1.6} /></DialogClose>
        </DialogHead>
        <Message>Entity created/updated successfully</Message>
        <ExtButton $tone="ok">OK</ExtButton>
      </Dialog>
    </Screen>
  );
}
